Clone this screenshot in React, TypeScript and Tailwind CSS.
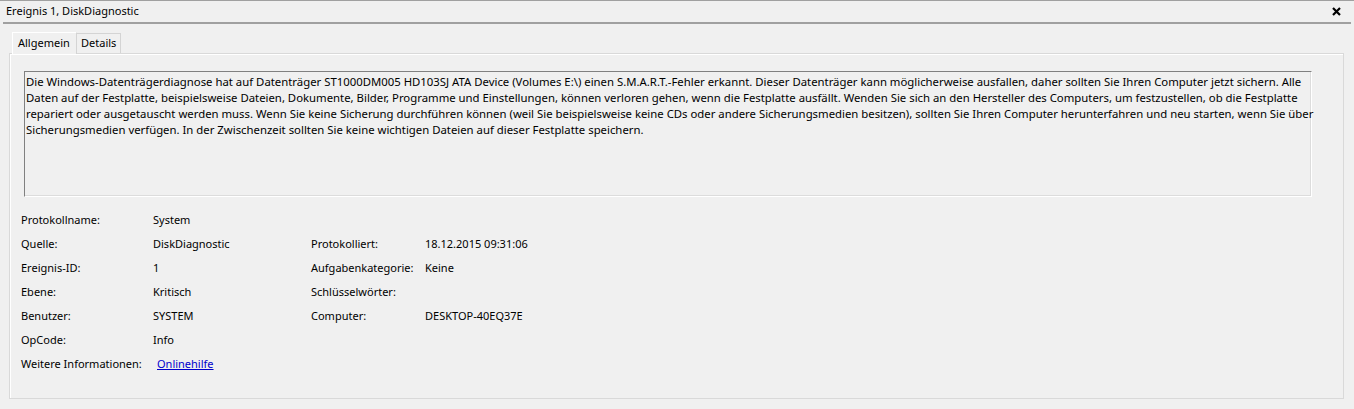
import React from "react";

const lines = [
  "Die Windows-Datenträgerdiagnose hat auf Datenträger ST1000DM005 HD103SJ ATA Device (Volumes E:\\) einen S.M.A.R.T.-Fehler erkannt. Dieser Datenträger kann möglicherweise ausfallen, daher sollten Sie Ihren Computer jetzt sichern. Alle",
  "Daten auf der Festplatte, beispielsweise Dateien, Dokumente, Bilder, Programme und Einstellungen, können verloren gehen, wenn die Festplatte ausfällt. Wenden Sie sich an den Hersteller des Computers, um festzustellen, ob die Festplatte",
  "repariert oder ausgetauscht werden muss. Wenn Sie keine Sicherung durchführen können (weil Sie beispielsweise keine CDs oder andere Sicherungsmedien besitzen), sollten Sie Ihren Computer herunterfahren und neu starten, wenn Sie über",
  "Sicherungsmedien verfügen. In der Zwischenzeit sollten Sie keine wichtigen Dateien auf dieser Festplatte speichern.",
];

function Row({
  l1,
  v1,
  l2,
  v2,
  link,
}: {
  l1: string;
  v1?: string;
  l2?: string;
  v2?: string;
  link?: boolean;
}) {
  return (
    <div className="flex h-[24px] items-center">
      <div className="w-[132px] shrink-0">{l1}</div>
      <div className="w-[158px] shrink-0">
        {link ? (
          <span className="ml-[4px] text-[#0000cc] underline">{v1}</span>
        ) : (
          v1
        )}
      </div>
      <div className="w-[114px] shrink-0">{l2}</div>
      <div>{v2}</div>
    </div>
  );
}

export default function App() {
  return (
    <div
      className="w-[1354px] h-[409px] bg-[#f0f0f0] border-t border-[#a0a0a0] text-[11px] text-black overflow-hidden"
      style={{ fontFamily: '"Noto Sans", "Open Sans", sans-serif' }}
    >
      <div className="relative flex h-[21px] items-center pl-[6px]">
        <span>Ereignis 1, DiskDiagnostic</span>
        <svg
          className="absolute right-[13px] top-[6px]"
          width="9"
          height="9"
          viewBox="0 0 9 9"
        >
          <path d="M1 1 L8 8 M8 1 L1 8" stroke="#000" strokeWidth="2.2" />
        </svg>
      </div>
      <div className="mx-[3px] h-[2px] bg-[#a0a0a0]" />
      <div className="pl-[12px] pt-[7px] flex items-end h-[29px]">
        <div className="relative z-10 flex h-[22px] w-[65px] items-center pl-[5px] border-t border-l border-white border-r border-r-[#d4d4d4] bg-[#f0f0f0] mb-[-1px]">
          Allgemein
        </div>
        <div className="flex h-[20px] w-[44px] items-center pl-[4px] border-t border-r border-[#d4d4d4] bg-[#f0f0f0]">
          Details
        </div>
      </div>
      <div className="ml-[9px] w-[1335px] h-[346px] border border-[#d9d9d9]">
        <div className="h-full w-full border-l border-t border-white pl-[13px] pt-[16px]">
          <div className="w-[1288px] h-[126px] border border-t-[#808080] border-l-[#808080] border-r-white border-b-white">
            <div className="h-full w-full border-r border-b border-[#dcdcdc] pl-[1px] pt-[2px] leading-[16px] text-[11.35px]">
              {lines.map((l, i) => (
                <div key={i} className="whitespace-nowrap">
                  {l}
                </div>
              ))}
            </div>
          </div>
          <div className="mt-[11px] ml-[-3px]">
            <Row l1="Protokollname:" v1="System" />
            <Row l1="Quelle:" v1="DiskDiagnostic" l2="Protokolliert:" v2="18.12.2015 09:31:06" />
            <Row l1="Ereignis-ID:" v1="1" l2="Aufgabenkategorie:" v2="Keine" />
            <Row l1="Ebene:" v1="Kritisch" l2="Schlüsselwörter:" />
            <Row l1="Benutzer:" v1="SYSTEM" l2="Computer:" v2="DESKTOP-40EQ37E" />
            <Row l1="OpCode:" v1="Info" />
            <Row l1="Weitere Informationen:" v1="Onlinehilfe" link />
          </div>
        </div>
      </div>
    </div>
  );
}
